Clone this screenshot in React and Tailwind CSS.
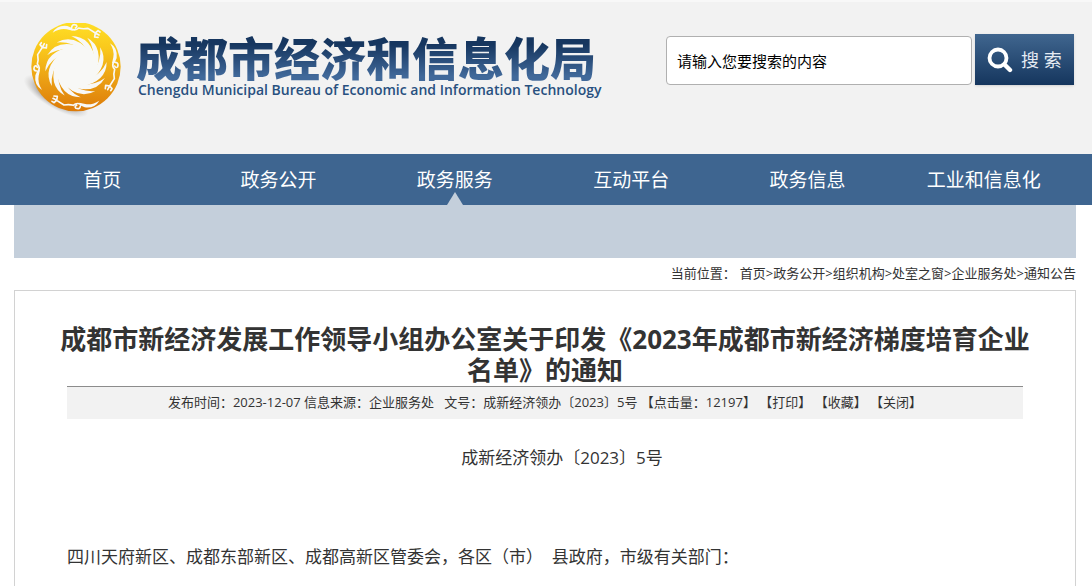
import React, { useState } from 'react';

const navItems = ['首页', '政务公开', '政务服务', '互动平台', '政务信息', '工业和信息化'];
const crumbs = ['首页', '政务公开', '组织机构', '处室之窗', '企业服务处', '通知公告'];

function Emblem() {
  return (
    <svg viewBox="0 21 312 291" className="h-[97px] w-[104px] shrink-0" aria-hidden="true">
      <defs>
        <linearGradient id="gold" x1="0" y1="0" x2="0" y2="1">
          <stop offset="0" stopColor="#ffdf26" />
          <stop offset="0.3" stopColor="#f9c81c" />
          <stop offset="0.65" stopColor="#eb9f14" />
          <stop offset="1" stopColor="#dc7a08" />
        </linearGradient>
        <radialGradient id="shade">
          <stop offset="0" stopColor="#3b2a18" stopOpacity="0.95" />
          <stop offset="0.6" stopColor="#5b5148" stopOpacity="0.4" />
          <stop offset="1" stopColor="#888" stopOpacity="0" />
        </radialGradient>
      </defs>
      <ellipse cx="96" cy="240" rx="110" ry="38" fill="url(#shade)" transform="rotate(30 96 240)" />
      <circle cx="156" cy="152" r="134" fill="url(#gold)" />
      <g transform="translate(156 152)" fill="#f8f8f6">
        <circle r="62" />
        {Array.from({ length: 12 }, (_, i) => (
          <path
            key={i}
            d="M-14 -92Q46 -92 60 -14L46 -26Q24 -76 -14 -92Z"
            transform={`rotate(${i * 30})`}
          />
        ))}
        {[0, 90, 180, 270].map((deg) => (
          <g key={deg} transform={`rotate(${deg})`}>
            <path d="M-70 -102Q-56 -126 -26 -122L-12 -116L-10 -108L-28 -112Q-48 -116 -70 -102Z" />
            <path
              d="M-16 -114Q-2 -106 8 -116Q20 -112 36 -115L58 -101M-13 -118Q-12 -129 0 -125Q6 -120 -2 -116M58 -101L66 -108M58 -101L56 -89M58 -101L69 -95M66 -108L72 -104M56 -89L66 -88"
              fill="none"
              stroke="#f8f8f6"
              strokeWidth="5"
              strokeLinecap="round"
              strokeLinejoin="round"
            />
          </g>
        ))}
      </g>
    </svg>
  );
}

function SearchBar() {
  const [keyword, setKeyword] = useState('请输入您要搜索的内容');

  return (
    <form className="mt-8 flex items-end gap-[3px]" onSubmit={(e) => e.preventDefault()}>
      <input
        type="text"
        aria-label="搜索"
        value={keyword}
        onChange={(e) => setKeyword(e.target.value)}
        className="h-[49px] w-[306px] rounded border border-[#b0b0b0] bg-white px-[10px] text-[15px] text-black outline-none"
      />
      <button
        type="submit"
        className="flex h-[51px] w-[99px] items-center gap-2 bg-linear-to-b from-[#40668f] to-[#15365e] pl-3 text-lg text-[#e4ebf3] shadow-sm"
      >
        <svg viewBox="0 0 26 26" className="size-[26px]" fill="none" stroke="#fff" aria-hidden="true">
          <circle cx="11" cy="11" r="8.5" strokeWidth="3.8" />
          <path d="M17.5 17.5L23 23" strokeWidth="4.4" strokeLinecap="round" />
        </svg>
        <span>搜 索</span>
      </button>
    </form>
  );
}

function Header() {
  return (
    <header className="border-t-2 border-[#f8f8f8] bg-[#f2f2f2]">
      <div className="flex h-[152px] items-start justify-between pr-[18px] pl-6">
        <a href="#" className="mt-[21px] flex items-start gap-2">
          <Emblem />
          <span className="mt-3 flex flex-col gap-px whitespace-nowrap">
            <span className="bg-linear-to-b from-[#16365f] from-20% to-[#41699a] to-90% bg-clip-text text-[46px] leading-[46px] font-black text-transparent">
              成都市经济和信息化局
            </span>
            <span className="px-[2px] text-[14px] leading-4 font-semibold text-[#28507f]">
              Chengdu Municipal Bureau of Economic and Information Technology
            </span>
          </span>
        </a>
        <SearchBar />
      </div>
    </header>
  );
}

function Nav() {
  return (
    <nav className="bg-[#3e6590] pr-5 pl-[14px]">
      <ul className="flex">
        {navItems.map((item) => (
          <li key={item} className="relative flex-1 text-center">
            <a href="#" className="block pt-0.5 text-[19px] leading-[49px] text-white">
              {item}
            </a>
            {item === '政务服务' && (
              <svg viewBox="0 0 16 13" className="absolute bottom-0 left-1/2 h-[13px] w-4 -translate-x-1/2" aria-hidden="true">
                <path d="M8 0L16 13H0Z" fill="#c4cfdb" />
              </svg>
            )}
          </li>
        ))}
      </ul>
    </nav>
  );
}

function Article() {
  return (
    <article className="border border-[#d2d2d2] px-[52px] pt-[33px] pb-10">
      <h1 className="-mx-2 text-center text-[26px] leading-[31px] font-bold">
        成都市新经济发展工作领导小组办公室关于印发《2023年成都市新经济梯度培育企业名单》的通知
      </h1>
      <div className="flex justify-center border-t border-[#8c8c8c] bg-[#f2f2f2] pb-0.5 text-[13px] leading-[30px] whitespace-pre">
        <span>发布时间：2023-12-07 信息来源：企业服务处   文号：成新经济领办〔2023〕5号 【点击量：12197】 </span>
        <button type="button">【打印】 </button>
        <button type="button">【收藏】 </button>
        <button type="button">【关闭】</button>
      </div>
      <div className="pt-[22px] text-[17px] leading-[33px]">
        <p className="indent-[2em] text-center">成新经济领办〔2023〕5号</p>
        <p className="pt-[66px]">
          四川天府新区、成都东部新区、成都高新区管委会，各区（市）&nbsp; 县政府，市级有关部门：
        </p>
      </div>
    </article>
  );
}

function App() {
  return (
    <div className="bg-white font-['Open_Sans','Noto_Sans_CJK_SC',sans-serif] text-[#333]">
      <Header />
      <Nav />
      <main className="mr-4 ml-[14px]">
        <div className="h-[53px] bg-[#c4cfdb]" />
        <div className="flex justify-end pb-0.5 text-[13px] leading-[30px]">
          <span className="mr-1">当前位置：</span>
          {crumbs.map((name, i) => (
            <React.Fragment key={name}>
              {i > 0 && <span>&gt;</span>}
              <a href="#">{name}</a>
            </React.Fragment>
          ))}
        </div>
        <Article />
      </main>
    </div>
  );
}

export default App;
